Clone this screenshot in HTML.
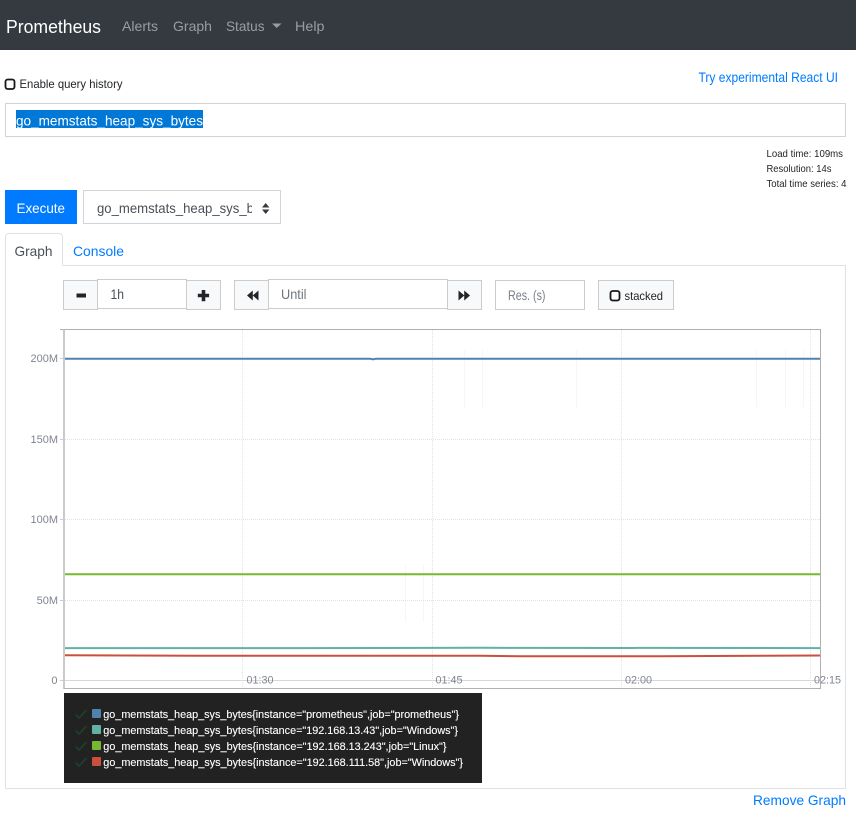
<!DOCTYPE html>
<html lang="en">
<head>
<meta charset="utf-8">
<title>Prometheus Time Series Collection and Processing Server</title>
<style>
html,body{margin:0;padding:0;background:#fff;width:856px;height:814px;overflow:hidden}
svg{display:block}
text{font-family:"Liberation Sans",Arial,sans-serif;white-space:pre}
</style>
</head>
<body>
<svg xmlns="http://www.w3.org/2000/svg" width="856" height="814" viewBox="0 0 856 814">
<defs><clipPath id="c"><rect x="90" y="195" width="162" height="25"/></clipPath></defs>
<rect width="856" height="814" fill="#fff"/>
<!-- navbar -->
<rect width="856" height="50" fill="#343a40"/>
<text x="6" y="33" font-size="18" fill="#fff" textLength="95" lengthAdjust="spacingAndGlyphs">Prometheus</text>
<g font-size="14" fill="#9a9da0">
<text x="122" y="31" textLength="36" lengthAdjust="spacingAndGlyphs">Alerts</text>
<text x="173" y="31" textLength="39" lengthAdjust="spacingAndGlyphs">Graph</text>
<text x="226" y="31" textLength="38.5" lengthAdjust="spacingAndGlyphs">Status</text>
<text x="295" y="31" textLength="29.5" lengthAdjust="spacingAndGlyphs">Help</text>
</g>
<path d="M272 23.5h9.5l-4.75 4.5z" fill="#9a9da0"/>
<!-- history -->
<rect x="5.5" y="79.5" width="9" height="9.5" rx="2.2" fill="#fff" stroke="#16181b" stroke-width="1.8"/>
<text x="19.5" y="88" font-size="12" fill="#212529" textLength="103" lengthAdjust="spacingAndGlyphs">Enable query history</text>
<text x="698.5" y="82" font-size="14" fill="#007bff" textLength="139.5" lengthAdjust="spacingAndGlyphs">Try experimental React UI</text>
<!-- query input -->
<rect x="5.5" y="103.5" width="840" height="33" fill="#fff" stroke="#ced4da"/>
<rect x="16" y="110" width="187" height="18" fill="#0078d7"/>
<text x="16" y="125.5" font-size="14" fill="#fff" textLength="187" lengthAdjust="spacingAndGlyphs">go_memstats_heap_sys_bytes</text>
<!-- stats -->
<g font-size="10.5" fill="#212529">
<text x="766.5" y="157" textLength="76.5" lengthAdjust="spacingAndGlyphs">Load time: 109ms</text>
<text x="766.5" y="172" textLength="65" lengthAdjust="spacingAndGlyphs">Resolution: 14s</text>
<text x="766.5" y="187" textLength="80" lengthAdjust="spacingAndGlyphs">Total time series: 4</text>
</g>
<!-- execute -->
<rect x="5" y="190" width="72" height="34" fill="#007bff"/>
<text x="16.5" y="213" font-size="14" fill="#fff" textLength="48.5" lengthAdjust="spacingAndGlyphs">Execute</text>
<rect x="83.5" y="190.5" width="197" height="33" fill="#fff" stroke="#ced4da"/>
<g clip-path="url(#c)"><text x="97" y="213" font-size="14" fill="#495057" textLength="181" lengthAdjust="spacingAndGlyphs">go_memstats_heap_sys_bytes</text></g>
<path d="M262 207.5l3.7-4.5 3.7 4.5zM262 209.5l3.7 4.5 3.7-4.5z" fill="#343a40"/>
<!-- tabs + panel -->
<path d="M5.5 788.5V237a3.5 3.5 0 0 1 3.5-3.5h50a3.5 3.5 0 0 1 3.5 3.5v28.5" fill="#fff" stroke="#dee2e6"/>
<path d="M62.5 265.5H845.5V788.5H5.5" fill="none" stroke="#dee2e6"/>
<text x="14.5" y="256" font-size="14" fill="#495057" textLength="38" lengthAdjust="spacingAndGlyphs">Graph</text>
<text x="73" y="256" font-size="14" fill="#007bff" textLength="51" lengthAdjust="spacingAndGlyphs">Console</text>
<!-- range controls -->
<g fill="#f8f9fa" stroke="#ccc">
<rect x="63.5" y="280.5" width="34" height="29"/>
<rect x="186.5" y="280.5" width="34" height="29"/>
<rect x="234.5" y="280.5" width="34" height="29"/>
<rect x="447.5" y="280.5" width="34" height="29"/>
</g>
<g fill="#fff" stroke="#ccc">
<rect x="97.5" y="279.5" width="89" height="29"/>
<rect x="268.5" y="279.5" width="179" height="29"/>
<rect x="495.5" y="280.5" width="89" height="29"/>
</g>
<rect x="598.5" y="280.5" width="75" height="29" fill="#f8f9fa" stroke="#ccc"/>
<path d="M76.5 293.5h9.5v4h-9.5z" fill="#212529"/>
<path d="M201.7 290h3.6v3.7h3.8v3.6h-3.8v3.9h-3.6v-3.9h-3.9v-3.6h3.9z" fill="#212529"/>
<path d="M252.8 290.5v10l-5.8-5zM258.5 290.5v10l-5.8-5z" fill="#212529"/>
<path d="M458.5 290.5v10l5.8-5zM464.2 290.5v10l5.8-5z" fill="#212529"/>
<text x="110.5" y="299" font-size="14" fill="#495057" textLength="13.5" lengthAdjust="spacingAndGlyphs">1h</text>
<text x="281" y="299" font-size="14" fill="#6c757d" textLength="25.5" lengthAdjust="spacingAndGlyphs">Until</text>
<text x="508" y="300" font-size="14" fill="#7a8087" textLength="37.5" lengthAdjust="spacingAndGlyphs">Res. (s)</text>
<rect x="610.5" y="291" width="9" height="9.5" rx="2.2" fill="#fff" stroke="#16181b" stroke-width="1.8"/>
<text x="624.5" y="300" font-size="12" fill="#212529" textLength="38.5" lengthAdjust="spacingAndGlyphs">stacked</text>
<!-- graph -->
<g stroke="#f6f6f6" stroke-width="1" fill="none">
<path d="M464.5 350V407M482.5 350V407M576.5 350V407M756.5 350V407M785.5 350V407M803.5 350V407M405.5 565V622M423.5 565V622"/>
</g>
<g stroke="#e2e2e2" stroke-width="1" stroke-dasharray="1 1" fill="none">
<path d="M242.5 330V688M432.5 330V688M621.5 330V688M810.5 330V688"/>
<path d="M65 439.5H820M65 519.5H820M65 600.5H820"/>
</g>
<path d="M65 680.5H820" stroke="#d8d8d8" stroke-width="1" fill="none"/>
<g fill="none" stroke-width="2">
<path d="M65 358.7H370L373 359.3L376 358.7H820" stroke="#4e83b0"/>
<path d="M65 574.3H820" stroke="#76b82f"/>
<path d="M65 648.1H300L480 647.8L820 648.1" stroke="#62b2a4"/>
<path d="M65 655.2L200 655.8H480L520 656.2H660L820 655.5" stroke="#c9503c"/>
</g>
<path d="M60 329.5H820.5V688.5H64" fill="none" stroke="#b0b0b0" stroke-width="1"/>
<path d="M64 329V689" stroke="#bcbcbc" stroke-width="1.6" fill="none"/>
<path d="M60 358.5H64M60 439.5H64M60 519.5H64M60 600.5H64M60 680.5H64" stroke="#ccc" fill="none"/>
<g font-size="11" fill="#7f8590" text-anchor="end">
<text x="58" y="362">200M</text>
<text x="58" y="443">150M</text>
<text x="58" y="523">100M</text>
<text x="58" y="604">50M</text>
<text x="57.5" y="684">0</text>
</g>
<g font-size="10.8" fill="#7f8590">
<text x="246.5" y="683.5">01:30</text>
<text x="435.5" y="683.5">01:45</text>
<text x="625" y="683.5">02:00</text>
<text x="814" y="683.5">02:15</text>
</g>
<!-- legend -->
<rect x="64" y="693" width="418" height="90" fill="#222"/>
<g fill="none" stroke="#1e4026" stroke-width="1.8">
<path d="M75.5 714.5l3.5 3.5 7.5-8"/>
<path d="M75.5 730.5l3.5 3.5 7.5-8"/>
<path d="M75.5 746.5l3.5 3.5 7.5-8"/>
<path d="M75.5 762.5l3.5 3.5 7.5-8"/>
</g>
<rect x="92" y="709" width="9" height="9" rx="1" fill="#4e83b0"/>
<rect x="92" y="725" width="9" height="9" rx="1" fill="#62b2a4"/>
<rect x="92" y="741" width="9" height="9" rx="1" fill="#76b82f"/>
<rect x="92" y="757" width="9" height="9" rx="1" fill="#c9503c"/>
<g font-size="11.4" fill="#fff" stroke="#fff" stroke-width="0.12">
<text x="103.3" y="718" textLength="355.7" lengthAdjust="spacingAndGlyphs">go_memstats_heap_sys_bytes{instance="prometheus",job="prometheus"}</text>
<text x="103.3" y="734" textLength="354.7" lengthAdjust="spacingAndGlyphs">go_memstats_heap_sys_bytes{instance="192.168.13.43",job="Windows"}</text>
<text x="103.3" y="750" textLength="343.2" lengthAdjust="spacingAndGlyphs">go_memstats_heap_sys_bytes{instance="192.168.13.243",job="Linux"}</text>
<text x="103.3" y="766" textLength="359.7" lengthAdjust="spacingAndGlyphs">go_memstats_heap_sys_bytes{instance="192.168.111.58",job="Windows"}</text>
</g>
<text x="753" y="805" font-size="14" fill="#007bff" textLength="93" lengthAdjust="spacingAndGlyphs">Remove Graph</text>
</svg>
</body>
</html>
